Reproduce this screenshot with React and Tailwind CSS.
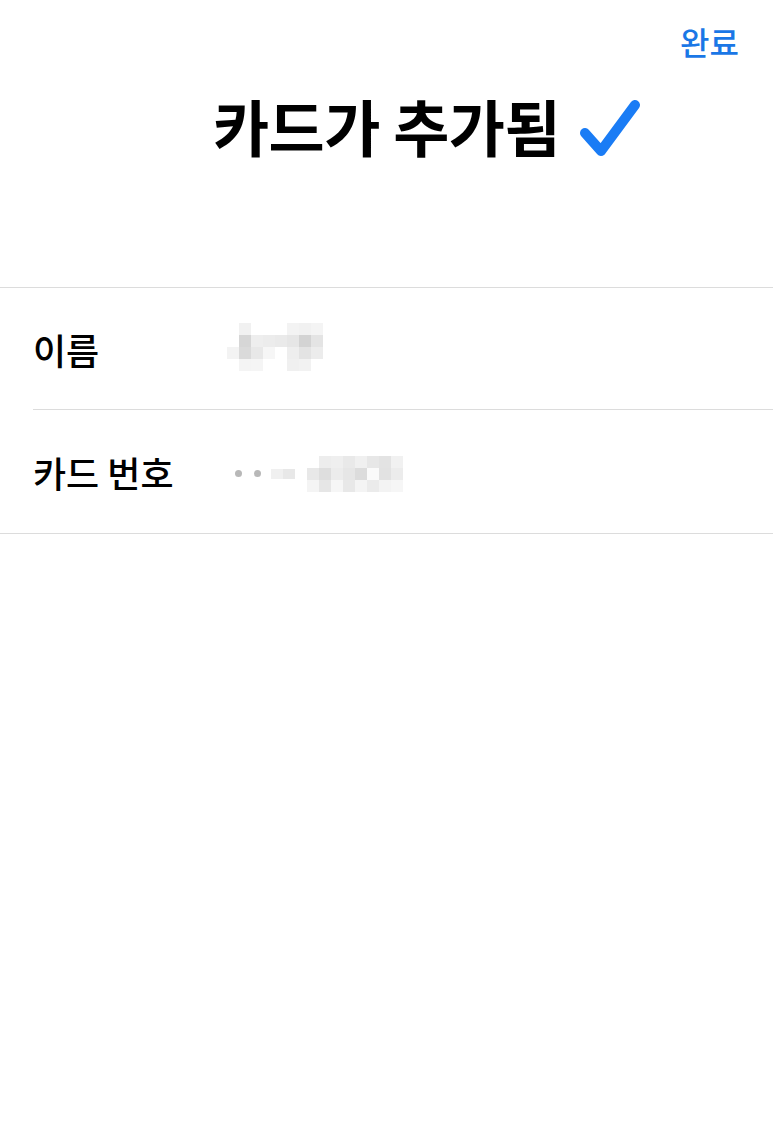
import React from 'react'

const font = { fontFamily: '"Noto Sans CJK KR", "Noto Sans", sans-serif' }

// pixelated (blurred) value blocks
const nameCells = [
  ['bg-white', 'bg-[#f1f1f1]', 'bg-white', 'bg-white', 'bg-white', 'bg-[#f3f3f3]', 'bg-[#f1f1f1]', 'bg-[#f4f4f4]'],
  ['bg-white', 'bg-[#d6d6d6]', 'bg-[#eeeeee]', 'bg-[#ececec]', 'bg-[#eaeaea]', 'bg-[#e6e6e6]', 'bg-[#d3d3d3]', 'bg-[#e4e4e4]'],
  ['bg-[#f3f3f3]', 'bg-[#dadada]', 'bg-[#e8e8e8]', 'bg-[#f6f6f6]', 'bg-white', 'bg-[#eeeeee]', 'bg-[#e3e3e3]', 'bg-[#ececec]'],
  ['bg-white', 'bg-[#f4f4f4]', 'bg-[#f5f5f5]', 'bg-white', 'bg-white', 'bg-[#f0f0f0]', 'bg-[#f2f2f2]', 'bg-white'],
]

const numCells = [
  ['bg-white', 'bg-[#ededed]', 'bg-[#efefef]', 'bg-[#e9e9e9]', 'bg-[#f0f0f0]', 'bg-[#e7e7e7]', 'bg-[#e3e3e3]', 'bg-[#f1f1f1]'],
  ['bg-[#e8e8e8]', 'bg-[#dedede]', 'bg-[#ececec]', 'bg-[#e6e6e6]', 'bg-[#dcdcdc]', 'bg-[#fafafa]', 'bg-[#e2e2e2]', 'bg-[#ececec]'],
  ['bg-[#f4f4f4]', 'bg-[#e6e6e6]', 'bg-[#f6f6f6]', 'bg-[#e8e8e8]', 'bg-[#f4f4f4]', 'bg-[#ebebeb]', 'bg-[#f3f3f3]', 'bg-[#f6f6f6]'],
]

function Mosaic({ cells }) {
  return (
    <div className="flex flex-col">
      {cells.map((row, i) => (
        <div key={i} className="flex">
          {row.map((c, j) => (
            <div key={j} className={`w-3 h-3 ${c}`} />
          ))}
        </div>
      ))}
    </div>
  )
}

function Check() {
  return (
    <svg width="62" height="60" viewBox="0 0 62 60" fill="none">
      <path
        d="M6 34 L22 52 L56 6"
        stroke="#1a7cf5"
        strokeWidth="10"
        strokeLinecap="round"
        strokeLinejoin="round"
      />
    </svg>
  )
}

export default function App() {
  return (
    <div className="w-[773px] h-[1133px] bg-white text-black" style={font}>
      <div className="flex justify-end pt-[21px] pr-[34px]">
        <button className="text-[32px] leading-[41px] text-[#1a77e6] font-medium">완료</button>
      </div>

      <div className="flex justify-center mt-[26px]">
        <h1 className="relative text-[61px] leading-[76px] font-bold tracking-[-0.5px]">
          카드가 추가됨
          <span className="absolute left-full top-[11px] ml-[19px]">
            <Check />
          </span>
        </h1>
      </div>

      <div className="mt-[123px] border-t border-[#dcdcdc]">
        <div className="ml-[33px] border-b border-[#dcdcdc] h-[122px] flex items-center">
          <div className="w-[194px] text-[36px] leading-none font-medium">이름</div>
          <div className="-mt-[4px]">
            <Mosaic cells={nameCells} />
          </div>
        </div>
        <div className="pl-[33px] border-b border-[#dcdcdc] h-[124px] flex items-center">
          <div className="w-[202px] text-[36px] leading-none font-medium">카드 번호</div>
          <div className="flex items-center mt-[4px]">
            <span className="w-[7px] h-[7px] rounded-full bg-[#b8b8b8]" />
            <span className="ml-[12px] w-[7px] h-[7px] rounded-full bg-[#b8b8b8]" />
            <span className="ml-[10px] w-[12px] h-[10px] bg-[#f0f0f0]" />
            <span className="w-[12px] h-[10px] bg-[#e8e8e8]" />
            <span className="ml-[12px]">
              <Mosaic cells={numCells} />
            </span>
          </div>
        </div>
      </div>
    </div>
  )
}
